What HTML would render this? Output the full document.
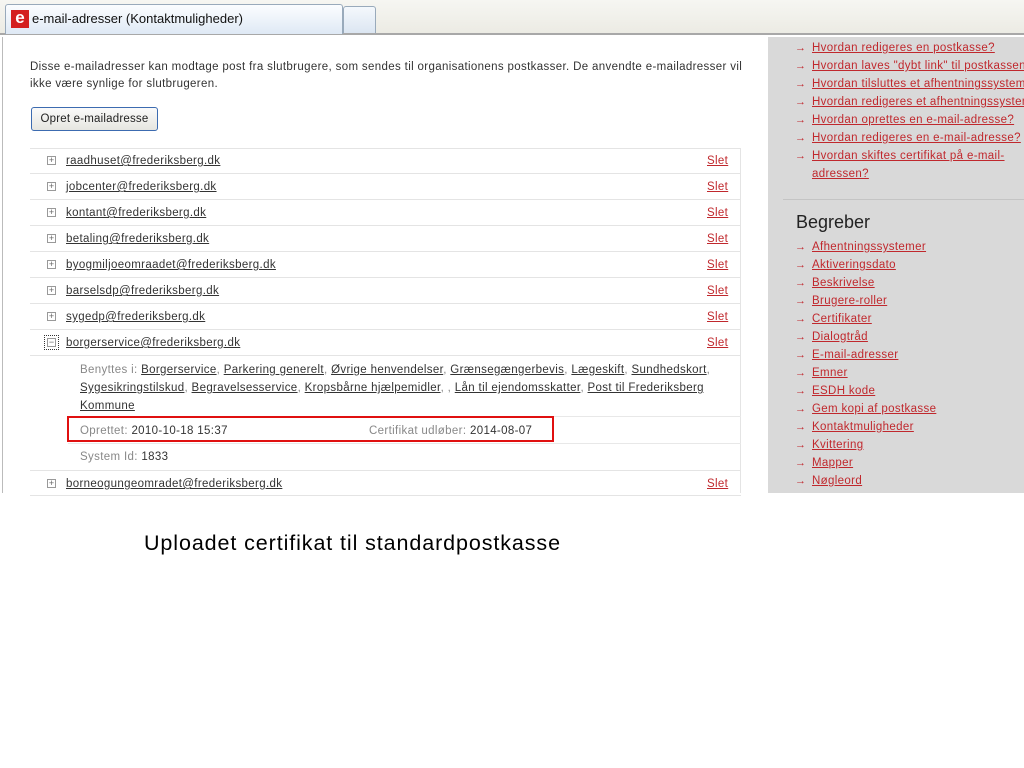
<!DOCTYPE html>
<html><head><meta charset="utf-8"><style>
*{margin:0;padding:0;box-sizing:border-box}
body{width:1024px;height:768px;background:#fff;position:relative;font-family:"Liberation Sans",sans-serif;font-size:11.5px;letter-spacing:0.35px;color:#333;overflow:hidden}
.a{position:absolute;white-space:nowrap}
a{color:#333;text-decoration:underline}
.r{color:#c0282d}
.row{position:absolute;left:30px;width:711px;height:26px;border-bottom:1px solid #e4e4e4}
.row .pm{position:absolute;left:17px;top:8px;width:9px;height:9px;border:1px solid #999;font-size:9px;line-height:7px;text-align:center;color:#666;letter-spacing:0}
.row .e{position:absolute;left:36px;top:7px}
.row .s{position:absolute;left:677px;top:7px;color:#c0282d}
.sb a{color:#c0282d}
.sb div{position:absolute;left:795px;white-space:nowrap;font-size:11.5px}
.sb div:before{content:"→";color:#c0282d;font-size:11px;font-weight:bold;position:absolute;left:0;top:0}
.sb div a{margin-left:17px}
</style></head><body>
<div class="a" style="left:0;top:0;width:1024px;height:35px;background:linear-gradient(#f6f6f2,#ecebe4);border-bottom:2px solid #a8a8a8"></div>
<div class="a" style="left:5px;top:4px;width:338px;height:30px;background:linear-gradient(#fbfdff,#dfe9f5);border:1px solid #9ab;border-bottom:none;border-radius:3px 3px 0 0"></div>
<div class="a" style="left:343px;top:6px;width:33px;height:27px;background:linear-gradient(#f4f8fc,#dce6f2);border:1px solid #9ab;border-bottom:none;border-radius:3px 3px 0 0"></div>
<div class="a" style="left:11px;top:10px;width:18px;height:18px;background:#d42020;color:#fff;font-weight:bold;font-size:17px;line-height:16px;text-align:center;letter-spacing:0">e</div>
<div class="a" style="left:32px;top:11px;font-size:13px;color:#111;letter-spacing:0">e-mail-adresser (Kontaktmuligheder)</div>
<div class="a" style="left:2px;top:37px;width:1px;height:456px;background:#bbb"></div>
<div class="a" style="left:30px;top:59px;color:#333;line-height:17px;white-space:normal;width:728px">Disse e-mailadresser kan modtage post fra slutbrugere, som sendes til organisationens postkasser. De anvendte e-mailadresser vil ikke være synlige for slutbrugeren.</div>
<div class="a" style="left:31px;top:107px;width:127px;height:24px;border:1px solid #3c6bb0;border-radius:3px;background:linear-gradient(#fafafa,#e6e6e0);text-align:center;line-height:22px;color:#222;letter-spacing:0.2px">Opret e-mailadresse</div>
<div class="a" style="left:30px;top:148px;width:711px;height:345px;border-right:1px solid #e4e4e4;border-top:1px solid #e4e4e4"></div>
<div class="row" style="top:148px"><span class="pm">+</span><a class="e">raadhuset@frederiksberg.dk</a><a class="s">Slet</a></div>
<div class="row" style="top:174px"><span class="pm">+</span><a class="e">jobcenter@frederiksberg.dk</a><a class="s">Slet</a></div>
<div class="row" style="top:200px"><span class="pm">+</span><a class="e">kontant@frederiksberg.dk</a><a class="s">Slet</a></div>
<div class="row" style="top:226px"><span class="pm">+</span><a class="e">betaling@frederiksberg.dk</a><a class="s">Slet</a></div>
<div class="row" style="top:252px"><span class="pm">+</span><a class="e">byogmiljoeomraadet@frederiksberg.dk</a><a class="s">Slet</a></div>
<div class="row" style="top:278px"><span class="pm">+</span><a class="e">barselsdp@frederiksberg.dk</a><a class="s">Slet</a></div>
<div class="row" style="top:304px"><span class="pm">+</span><a class="e">sygedp@frederiksberg.dk</a><a class="s">Slet</a></div>
<div class="row" style="top:330px"><span class="pm" style="outline:1px dotted #333;outline-offset:2px">−</span><a class="e">borgerservice@frederiksberg.dk</a><a class="s">Slet</a></div>
<div class="a" style="left:80px;top:361px;line-height:18px;color:#888;white-space:normal;width:640px">Benyttes i: <a>Borgerservice</a>, <a>Parkering generelt</a>, <a>Øvrige henvendelser</a>, <a>Grænsegængerbevis</a>, <a>Lægeskift</a>, <a>Sundhedskort</a>, <a>Sygesikringstilskud</a>, <a>Begravelsesservice</a>, <a>Kropsbårne hjælpemidler</a>, , <a>Lån til ejendomsskatter</a>, <a>Post til Frederiksberg Kommune</a></div>
<div class="a" style="left:68px;top:416px;width:673px;height:1px;background:#e8e8e8"></div>
<div class="a" style="left:68px;top:443px;width:673px;height:1px;background:#e8e8e8"></div>
<div class="a" style="left:80px;top:425px;color:#888">Oprettet: <span style="color:#333">2010-10-18 15:37</span></div>
<div class="a" style="left:369px;top:425px;color:#888">Certifikat udløber: <span style="color:#333">2014-08-07</span></div>
<div class="a" style="left:67px;top:416px;width:487px;height:26px;border:2px solid #e01010"></div>
<div class="a" style="left:80px;top:451px;color:#888">System Id: <span style="color:#333">1833</span></div>
<div class="row" style="top:470px;border-top:1px solid #e4e4e4"><span class="pm">+</span><a class="e">borneogungeomradet@frederiksberg.dk</a><a class="s">Slet</a></div>
<div class="a" style="left:768px;top:37px;width:256px;height:456px;background:#d9d9d9"></div>
<div class="a" style="left:783px;top:199px;width:241px;height:1px;background:#c4c4c4"></div>
<div class="sb">
<div style="top:42px"><a>Hvordan redigeres en postkasse?</a></div>
<div style="top:60px"><a>Hvordan laves "dybt link" til postkassen</a></div>
<div style="top:78px"><a>Hvordan tilsluttes et afhentningssystem</a></div>
<div style="top:96px"><a>Hvordan redigeres et afhentningssystem</a></div>
<div style="top:114px"><a>Hvordan oprettes en e-mail-adresse?</a></div>
<div style="top:132px"><a>Hvordan redigeres en e-mail-adresse?</a></div>
<div style="top:150px"><a>Hvordan skiftes certifikat på e-mail-</a></div>
<div style="top:241px"><a>Afhentningssystemer</a></div>
<div style="top:259px"><a>Aktiveringsdato</a></div>
<div style="top:277px"><a>Beskrivelse</a></div>
<div style="top:295px"><a>Brugere-roller</a></div>
<div style="top:313px"><a>Certifikater</a></div>
<div style="top:331px"><a>Dialogtråd</a></div>
<div style="top:349px"><a>E-mail-adresser</a></div>
<div style="top:367px"><a>Emner</a></div>
<div style="top:385px"><a>ESDH kode</a></div>
<div style="top:403px"><a>Gem kopi af postkasse</a></div>
<div style="top:421px"><a>Kontaktmuligheder</a></div>
<div style="top:439px"><a>Kvittering</a></div>
<div style="top:457px"><a>Mapper</a></div>
<div style="top:475px"><a>Nøgleord</a></div>
</div>
<div class="a" style="left:812px;top:168px;font-size:11.5px"><a class="r">adressen?</a></div>
<div class="a" style="left:796px;top:212px;font-size:18px;color:#222;letter-spacing:0">Begreber</div>
<div class="a" style="left:144px;top:531px;font-size:21.5px;letter-spacing:0.9px;color:#000">Uploadet certifikat til standardpostkasse</div>
</body></html>
